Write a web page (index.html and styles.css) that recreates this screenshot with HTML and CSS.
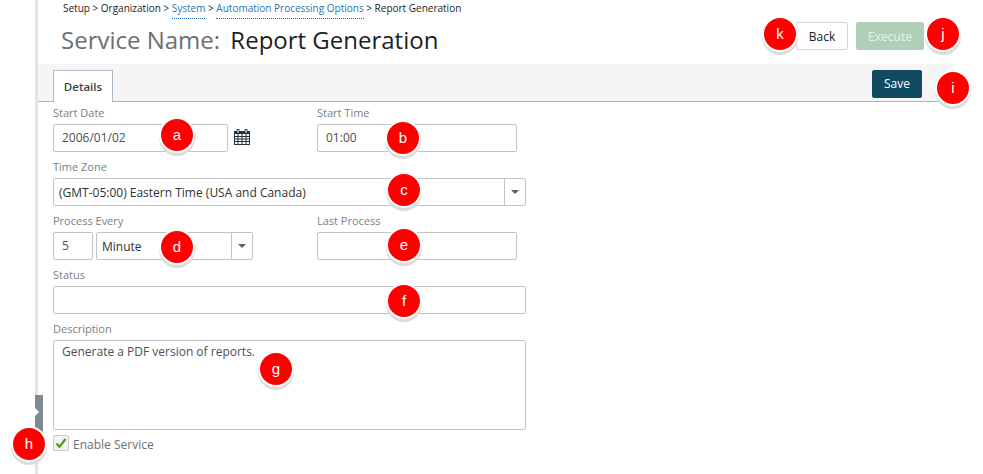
FILE: index.html
```html
<!DOCTYPE html>
<html lang="en">
<head>
<meta charset="utf-8">
<title>Report Generation</title>
<link rel="stylesheet" href="styles.css">
</head>
<body>
<div class="page">
  <div class="rail"><div class="handle"><span class="handle-arrow"></span></div></div>
  <main class="main">
    <nav class="crumbs">Setup &gt; Organization &gt; <a href="#" class="crumb-link">System</a> &gt; <a href="#" class="crumb-link">Automation Processing Options</a> &gt; Report Generation</nav>
    <header class="title-row">
      <h1 class="title"><span class="title-key">Service Name:</span> <span class="title-val">Report Generation</span></h1>
      <div class="actions">
        <button class="btn btn-back">Back</button>
        <button class="btn btn-exec">Execute</button>
      </div>
    </header>
    <div class="tabbar">
      <div class="tab">Details</div>
      <button class="btn btn-save">Save</button>
    </div>
    <form class="form">
      <div class="row">
        <div class="field f-date">
          <label class="label">Start Date</label>
          <div class="date-wrap">
            <div class="input w-date">2006/01/02</div>
            <svg class="cal" width="16" height="16" viewBox="0 0 16 16"><rect x="0.5" y="2.5" width="15" height="13" fill="#fff" stroke="#26323c"/><rect x="1" y="3" width="14" height="2" fill="#26323c"/><path d="M1 7.500h14M1 10h14M1 12.500h14M4 5v10M8 5v10M12 5v10" stroke="#26323c" stroke-width="1" fill="none"/><rect x="3" y="0.500" width="2" height="3.500" fill="#fff" stroke="#26323c" stroke-width="0.800"/><rect x="11" y="0.500" width="2" height="3.500" fill="#fff" stroke="#26323c" stroke-width="0.800"/></svg>
          </div>
        </div>
        <div class="field">
          <label class="label">Start Time</label>
          <div class="input w-right">01:00</div>
        </div>
      </div>
      <div class="field">
        <label class="label">Time Zone</label>
        <div class="select w-full"><span class="select-text">(GMT-05:00) Eastern Time (USA and Canada)</span><span class="select-btn"><i class="caret"></i></span></div>
      </div>
      <div class="row">
        <div class="field f-date">
          <label class="label">Process Every</label>
          <div class="every">
            <div class="input w-num">5</div>
            <div class="select w-unit"><span class="select-text">Minute</span><span class="select-btn"><i class="caret"></i></span></div>
          </div>
        </div>
        <div class="field">
          <label class="label">Last Process</label>
          <div class="input w-right"></div>
        </div>
      </div>
      <div class="field">
        <label class="label">Status</label>
        <div class="input w-full"></div>
      </div>
      <div class="field">
        <label class="label">Description</label>
        <div class="textarea w-full">Generate a PDF version of reports.</div>
      </div>
      <div class="check-row">
        <span class="check"><svg width="14" height="14" viewBox="0 0 14 14"><path d="M2.500 7.500l3 3.200 6-7.700" fill="none" stroke="#4f9a1f" stroke-width="2.200"/></svg></span>
        <span class="check-label">Enable Service</span>
      </div>
    </form>
  </main>
</div>
<span class="badge b-a">a</span>
<span class="badge b-b">b</span>
<span class="badge b-c">c</span>
<span class="badge b-d">d</span>
<span class="badge b-e">e</span>
<span class="badge b-f">f</span>
<span class="badge b-g">g</span>
<span class="badge b-h">h</span>
<span class="badge b-i">i</span>
<span class="badge b-j">j</span>
<span class="badge b-k">k</span>
</body>
</html>
```

FILE: styles.css
```css
* { box-sizing: border-box; }
html, body { margin: 0; padding: 0; }
body {
  width: 983px;
  height: 474px;
  overflow: hidden;
  background: #fff;
  font-family: "Open Sans", sans-serif;
  position: relative;
}
.page { display: flex; height: 474px; padding-left: 35px; }
.rail { width: 3px; background: #e3e3e3; position: relative; flex: none; }
.handle {
  position: absolute;
  left: 0;
  top: 395px;
  width: 8px;
  height: 44px;
  background: #7f8a93;
}
.handle-arrow {
  position: absolute;
  left: 0;
  top: 13px;
  border-left: 4px solid #fff;
  border-top: 4px solid transparent;
  border-bottom: 4px solid transparent;
}
.main { width: 915px; flex: none; }
.crumbs {
  height: 19px;
  padding: 2px 0 0 25px;
  font-size: 10px;
  line-height: 13px;
  color: #1c1c1c;
}
.crumb-link {
  color: #2a74ad;
  text-decoration: none;
  border-bottom: 1px dotted #1f6fb5;
  padding-bottom: 3px;
}
.title-row { height: 45px; display: flex; justify-content: space-between; }
.title { margin: 0; padding: 2px 0 0 23px; font-size: 24px; line-height: 37px; font-weight: 400; }
.title-key { color: #6b7073; margin-right: 4px; }
.title-val { color: #1c1f22; }
.actions { display: flex; gap: 8px; padding-top: 3px; margin-right: 29px; }
.btn {
  font-family: "Open Sans", sans-serif;
  font-size: 12px;
  height: 28px;
  border-radius: 2px;
  padding: 0;
}
.btn-back { width: 52px; background: #fff; border: 1px solid #d5d5d5; color: #222; }
.btn-exec { width: 68px; background: #afd0b7; border: 1px solid #afd0b7; color: #e6f2e9; }
.tabbar {
  height: 38px;
  background: #f5f5f5;
  border-bottom: 1px solid #a9b8c8;
  display: flex;
  justify-content: space-between;
  padding: 6px 31px 0 15px;
}
.tab {
  width: 60px;
  height: 32px;
  background: #fff;
  border: 1px solid #a9b8c8;
  border-bottom: 0;
  font-size: 11.5px;
  font-weight: 600;
  color: #3a444c;
  text-align: center;
  line-height: 32px;
}
.btn-save { width: 50px; background: #114a61; border: 1px solid #114a61; color: #fff; padding-bottom: 2px; }
.form { padding: 4px 0 0 15px; }
.row { display: flex; }
.f-date { width: 264px; }
.field { margin-bottom: 8px; }
.label { display: block; height: 18px; font-size: 11px; line-height: 13px; color: #7a7f83; }
.input, .select, .textarea {
  height: 28px;
  border: 1px solid #c4c4c4;
  border-radius: 2px;
  background: #fff;
  font-size: 12px;
  line-height: 26px;
  color: #4a4f53;
}
.input { padding-left: 8px; }
.w-date { width: 175px; }
.w-right { width: 200px; }
.w-full { width: 473px; }
.w-num { width: 40px; padding-left: 8px; }
.w-unit { width: 157px; }
.date-wrap { display: flex; align-items: center; gap: 6px; }
.cal { margin-top: -3px; }
.every { display: flex; gap: 3px; }
.select { display: flex; color: #2e3336; }
.select-text { flex: 1; padding: 1px 0 0 5px; white-space: nowrap; }
.select-btn {
  width: 21px;
  border-left: 1px solid #c4c4c4;
  display: flex;
  align-items: center;
  justify-content: center;
}
.caret {
  border-top: 4px solid #5a6066;
  border-left: 4px solid transparent;
  border-right: 4px solid transparent;
}
.textarea { height: 90px; padding: 2px 8px; line-height: 18px; }
.check-row { display: flex; align-items: center; gap: 4px; margin-top: -3px; height: 16px; }
.check {
  width: 16px;
  height: 16px;
  border: 1px solid #c8c8c8;
  border-radius: 2px;
  background: #f4f4f4;
  display: flex;
  align-items: center;
  justify-content: center;
}
.check-label { font-size: 12px; color: #6a7075; padding-top: 2px; }
.badge {
  position: absolute;
  width: 36px;
  height: 36px;
  border: 2px solid #fff;
  border-radius: 50%;
  background: #f00;
  color: #fff;
  font-family: "Liberation Sans", sans-serif;
  font-size: 15px;
  line-height: 32px;
  text-align: center;
  box-shadow: 0 3px 0 #dcdcdc;
}
.b-a { left: 159px; top: 117px; }
.b-b { left: 385px; top: 120px; }
.b-c { left: 386px; top: 172px; }
.b-d { left: 159px; top: 229px; }
.b-e { left: 386px; top: 227px; }
.b-f { left: 386px; top: 283px; }
.b-g { left: 258px; top: 351px; }
.b-h { left: 11px; top: 426px; }
.b-i { left: 935px; top: 70px; }
.b-j { left: 925px; top: 16px; }
.b-k { left: 762px; top: 16px; }
```
